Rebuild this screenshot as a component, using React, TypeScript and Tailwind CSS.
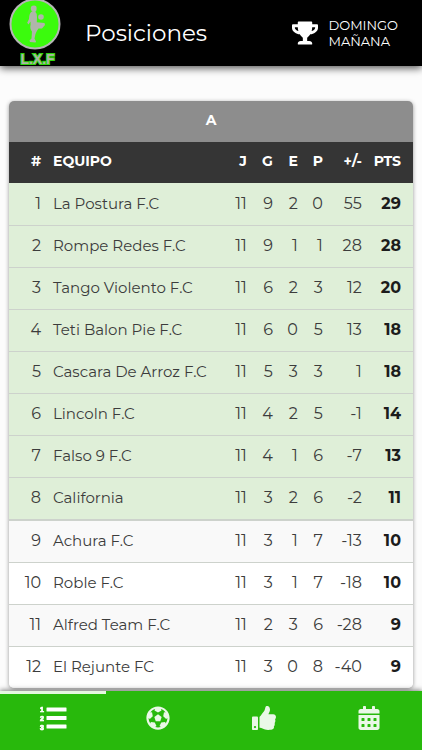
import React from 'react';
import { FaTrophy, FaFutbol, FaThumbsUp, FaCalendarAlt } from 'react-icons/fa';

interface Team {
  name: string;
  j: number;
  g: number;
  e: number;
  p: number;
  diff: number;
  pts: number;
}

const teams: Team[] = [
  { name: 'La Postura F.C', j: 11, g: 9, e: 2, p: 0, diff: 55, pts: 29 },
  { name: 'Rompe Redes F.C', j: 11, g: 9, e: 1, p: 1, diff: 28, pts: 28 },
  { name: 'Tango Violento F.C', j: 11, g: 6, e: 2, p: 3, diff: 12, pts: 20 },
  { name: 'Teti Balon Pie F.C', j: 11, g: 6, e: 0, p: 5, diff: 13, pts: 18 },
  { name: 'Cascara De Arroz F.C', j: 11, g: 5, e: 3, p: 3, diff: 1, pts: 18 },
  { name: 'Lincoln F.C', j: 11, g: 4, e: 2, p: 5, diff: -1, pts: 14 },
  { name: 'Falso 9 F.C', j: 11, g: 4, e: 1, p: 6, diff: -7, pts: 13 },
  { name: 'California', j: 11, g: 3, e: 2, p: 6, diff: -2, pts: 11 },
  { name: 'Achura F.C', j: 11, g: 3, e: 1, p: 7, diff: -13, pts: 10 },
  { name: 'Roble F.C', j: 11, g: 3, e: 1, p: 7, diff: -18, pts: 10 },
  { name: 'Alfred Team F.C', j: 11, g: 2, e: 3, p: 6, diff: -28, pts: 9 },
  { name: 'El Rejunte FC', j: 11, g: 3, e: 0, p: 8, diff: -40, pts: 9 },
];

// the first eight go through to the playoffs
const QUALIFIED = 8;

const rowColor = (index: number) => {
  if (index < QUALIFIED) return 'bg-[#dfefd8]';
  return index % 2 === 0 ? 'bg-[#f9f9f9]' : 'bg-white';
};

// the last qualified row has a slightly heavier rule under it
const rowHeight = (index: number) => (index === QUALIFIED - 1 ? 'h-[43px] border-b-2' : 'h-[42px] border-b');

const Logo: React.FC = () => (
  <svg viewBox="0 0 52 66" className="h-[66px] w-[52px] shrink-0 overflow-visible" role="img" aria-label="LXF">
    <circle cx="26" cy="24" r="24.5" fill="#3bfb0d" stroke="#b5b5b5" strokeWidth="2" />
    <g fill="#b0b5ab">
      <path d="M21.8 9 Q21.5 5.6 25 5.6 Q28 5.6 27.6 9 Q27.5 12 25 12.3 Q22.3 12 21.8 9 Z" />
      <path d="M23 11.5 L26.5 12 Q28.5 14 28 17 L27.8 22.2 L35.5 23 L36 25 L33 28.5 L29.5 28.5 Q27.5 31 26.5 34 L25.5 38.5 L27 41.5 L26.5 42.6 L21 42 L20.5 40.5 L22.5 38.5 L23 31.5 Q20.5 28.5 21.6 24.5 L21.5 21.5 L19.5 24.5 L18.2 22.8 L20 19 Q20 13 23 11.5 Z" />
      <circle cx="32" cy="17" r="2.8" />
    </g>
    <text
      x="28.5"
      y="64"
      textAnchor="middle"
      fontFamily="'Liberation Sans', sans-serif"
      fontWeight="bold"
      fontSize="14"
      fill="#a9b5a5"
      stroke="#2fd60c"
      strokeWidth="2"
      paintOrder="stroke"
    >
      L.X.F
    </text>
  </svg>
);

const RankingIcon: React.FC<{ className?: string }> = ({ className }) => (
  <svg viewBox="0 0 28 26" className={className} fill="currentColor" aria-hidden="true">
    <g fontFamily="'Liberation Sans', sans-serif" fontWeight="bold" fontSize="7" stroke="currentColor" strokeWidth="0.7">
      <text x="1" y="7">1</text>
      <text x="1" y="16">2</text>
      <text x="1" y="25">3</text>
    </g>
    <rect x="7.5" y="2.5" width="20" height="4" rx="0.5" />
    <rect x="7.5" y="11" width="20" height="4" rx="0.5" />
    <rect x="7.5" y="19.5" width="20" height="4" rx="0.5" />
  </svg>
);

const tabs = [
  { label: 'Posiciones', Icon: RankingIcon, size: 'h-[26px] w-7 text-white' },
  { label: 'Partidos', Icon: FaFutbol, size: 'size-6 text-white/90' },
  { label: 'Fair play', Icon: FaThumbsUp, size: 'size-6 text-white/90' },
  { label: 'Calendario', Icon: FaCalendarAlt, size: 'size-6 text-white/90' },
];

const Header: React.FC = () => (
  <header className="sticky top-0 z-10 flex h-[66px] items-center bg-black pl-[9px] pr-6 text-white shadow-[0_2px_8px_rgba(0,0,0,0.7)]">
    <Logo />
    <h1 className="ml-6 flex-1 text-[23px]">Posiciones</h1>
    <button className="flex items-center gap-[10px] text-left">
      <FaTrophy className="size-[26px]" />
      <span className="text-[13px] leading-4">
        DOMINGO
        <br />
        MAÑANA
      </span>
    </button>
  </header>
);

const Standings: React.FC = () => (
  <table className="w-full table-fixed text-right text-base text-[#3c3c3c]">
    <colgroup>
      <col className="w-[38px]" />
      <col />
      <col className="w-8" />
      <col className="w-[26px]" />
      <col className="w-[25px]" />
      <col className="w-[25px]" />
      <col className="w-[39px]" />
      <col className="w-[45px]" />
    </colgroup>
    <thead className="text-sm font-bold text-white">
      <tr className="h-[41px] bg-[#8d8d8d]">
        <th colSpan={8} className="pb-[3px] text-center">A</th>
      </tr>
      <tr className="h-[41px] bg-[#353535]">
        <th className="pb-[3px] pr-[6px]">#</th>
        <th className="pb-[3px] pl-[6px] text-left">EQUIPO</th>
        <th className="pb-[3px] pr-[6px]">J</th>
        <th className="pb-[3px] pr-[6px]">G</th>
        <th className="pb-[3px] pr-[6px]">E</th>
        <th className="pb-[3px] pr-[6px]">P</th>
        <th className="pb-[3px] pr-[6px]">+/-</th>
        <th className="pb-[3px] pr-3">PTS</th>
      </tr>
    </thead>
    <tbody>
      {teams.map((team, i) => (
        <tr key={team.name} className={`border-[#cdd2cc] last:border-b-0 ${rowHeight(i)} ${rowColor(i)}`}>
          <td className="pr-[6px]">{i + 1}</td>
          <td className="whitespace-nowrap pl-[6px] text-left text-[15px]">{team.name}</td>
          <td className="pr-[6px]">{team.j}</td>
          <td className="pr-[6px]">{team.g}</td>
          <td className="pr-[6px]">{team.e}</td>
          <td className="pr-[6px]">{team.p}</td>
          <td className="pr-[6px]">{team.diff}</td>
          <td className="pr-3 font-bold text-[#1c1c1c]">{team.pts}</td>
        </tr>
      ))}
    </tbody>
  </table>
);

const TabBar: React.FC = () => (
  <nav className="fixed inset-x-0 bottom-0 z-10 grid h-[59px] grid-cols-4 bg-[#28b90c] shadow-[0_-1px_5px_rgba(0,0,0,0.5)]">
    {tabs.map(({ label, Icon, size }, i) => (
      <button
        key={label}
        aria-label={label}
        className={`flex items-center justify-center border-t-[3px] pb-2 ${i === 0 ? 'border-[#e4f7e0]' : 'border-transparent'}`}
      >
        <Icon className={size} />
      </button>
    ))}
  </nav>
);

export default function App() {
  return (
    <div className="min-h-screen bg-[#fcfcfc] font-['Montserrat','Inter',sans-serif]">
      <Header />
      <main className="px-[9px] pb-[61px] pt-[35px]">
        <section className="overflow-hidden rounded-[5px] shadow-[0_1px_4px_rgba(0,0,0,0.4)]">
          <Standings />
        </section>
      </main>
      <TabBar />
    </div>
  );
}
